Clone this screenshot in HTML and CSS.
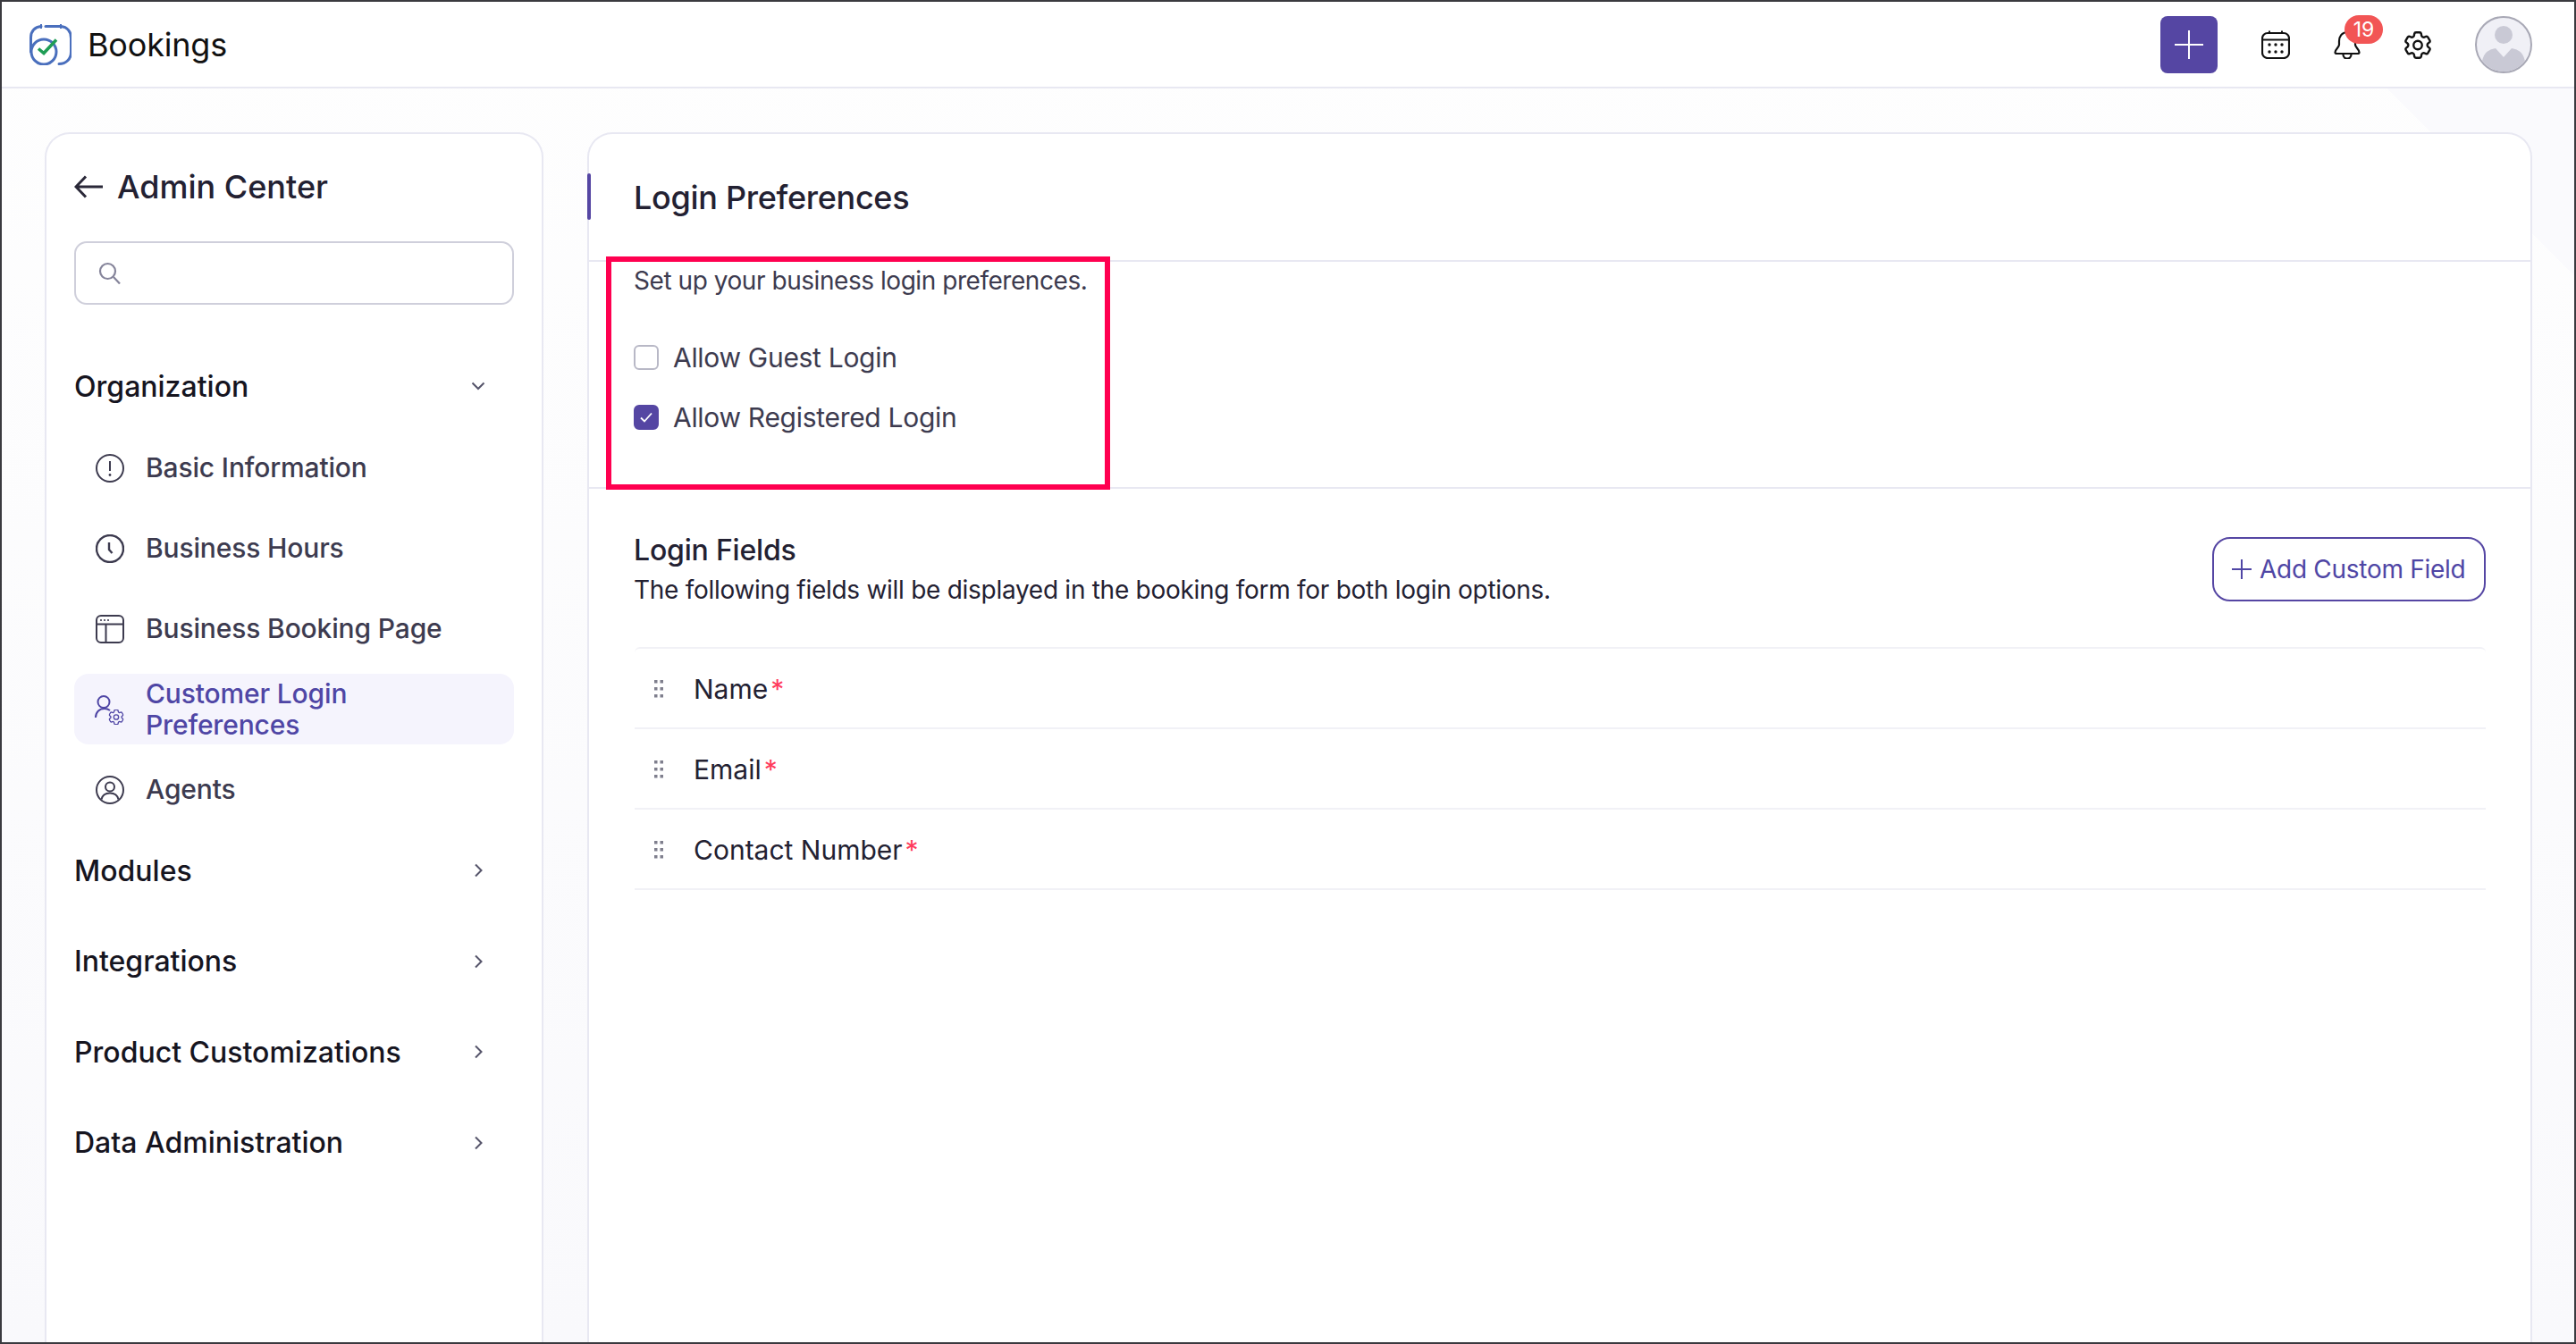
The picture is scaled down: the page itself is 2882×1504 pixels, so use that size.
FILE: index.html
```html
<!DOCTYPE html>
<html lang="en">
<head>
    <meta charset="UTF-8">
    <title>Bookings</title>
    <link rel="stylesheet" href="styles.css">
</head>
<body>
    <svg class="defs" width="0" height="0">
        <symbol id="cog" viewBox="2.5 2.5 19 19">
            <path d="M9.594 3.94c.09-.542.56-.94 1.11-.94h2.593c.55 0 1.02.398 1.11.94l.213 1.281c.063.374.313.686.645.87.074.04.147.083.22.127.325.196.72.257 1.075.124l1.217-.456a1.125 1.125 0 011.37.49l1.296 2.247a1.125 1.125 0 01-.26 1.431l-1.003.827c-.293.24-.438.613-.431.992a6.759 6.759 0 010 .255c-.007.378.138.75.43.99l1.005.828c.424.35.534.954.26 1.43l-1.298 2.247a1.125 1.125 0 01-1.369.491l-1.217-.456c-.355-.133-.75-.072-1.076.124a6.57 6.57 0 01-.22.128c-.331.183-.581.495-.644.869l-.213 1.28c-.09.543-.56.941-1.11.941h-2.594c-.55 0-1.02-.398-1.11-.94l-.213-1.281c-.062-.374-.312-.686-.644-.87a6.52 6.52 0 01-.22-.127c-.325-.196-.72-.257-1.076-.124l-1.217.456a1.125 1.125 0 01-1.369-.49l-1.297-2.247a1.125 1.125 0 01.26-1.431l1.004-.827c.292-.24.437-.613.43-.992a6.932 6.932 0 010-.255c.007-.378-.138-.75-.43-.99l-1.004-.828a1.125 1.125 0 01-.26-1.43l1.297-2.247a1.125 1.125 0 011.37-.491l1.216.456c.356.133.751.072 1.076-.124.072-.044.146-.087.22-.128.332-.183.582-.495.644-.869l.214-1.281z" fill="none" stroke="currentColor" stroke-width="1.5"/>
            <circle cx="12" cy="12" r="3" fill="none" stroke="currentColor" stroke-width="1.5"/>
        </symbol>
        <symbol id="chev-right" viewBox="0 0 16 16">
            <path d="M5 1.500 11.500 8 5 14.500" fill="none" stroke="currentColor" stroke-width="2"/>
        </symbol>
        <symbol id="drag" viewBox="0 0 10 20">
            <path d="M0 0h3.500v3.500H0zM6.500 0H10v3.500H6.500zM0 8h3.500v3.500H0zM6.500 8H10v3.500H6.500zM0 16h3.500v3.500H0zM6.500 16H10v3.500H6.500z" fill="currentColor"/>
        </symbol>
    </svg>
    <div class="frame">
        <!-- Top bar -->
        <header class="topbar">
            <div class="brand">
                <svg class="logo" viewBox="0 0 47 47" width="47" height="47" fill="none">
                    <path d="M13 3.500C6 4 1.500 9 1.500 16V32" stroke="#4a6fbd" stroke-width="3" stroke-linecap="round"/>
                    <path d="M18 3.500H35" stroke="#4a6fbd" stroke-width="3" stroke-linecap="round"/>
                    <path d="M35 3.500C42 4 46.500 9 46.500 17V32C46.500 40 41 45.500 33 45.500" stroke="#4a6fbd" stroke-width="3" stroke-linecap="round"/>
                    <path d="M13 1v5M35 1v5" stroke="#4a6fbd" stroke-width="2"/>
                    <ellipse cx="16" cy="32" rx="14" ry="14" stroke="#4a6fbd" stroke-width="3"/>
                    <path d="M10 28.500l6 5 14-15" stroke="#1f9d55" stroke-width="3.500"/>
                </svg>
                <span class="brand-name">Bookings</span>
            </div>
            <div class="top-actions">
                <div class="add-btn">
                    <svg viewBox="0 0 32 32" width="32" height="32"><path d="M16 0v32M0 16h32" stroke="#fff" stroke-width="2"/></svg>
                </div>
                <svg class="top-icon" viewBox="0 0 32 32" width="32" height="32" fill="none" stroke="#111" stroke-width="2.200">
                    <rect x="1" y="3" width="30" height="28" rx="6"/>
                    <path d="M1 10.500h30M9 0.500v3M23 0.500v3" stroke-width="2"/>
                    <g fill="#111" stroke="none">
                        <circle cx="9" cy="16" r="1.700"/><circle cx="16" cy="16" r="1.700"/><circle cx="23" cy="16" r="1.700"/>
                        <circle cx="9" cy="24" r="1.700"/><circle cx="16" cy="24" r="1.700"/><circle cx="23" cy="24" r="1.700"/>
                    </g>
                </svg>
                <div class="bell">
                    <svg viewBox="0 0 30 32" width="30" height="32" fill="none" stroke="#111" stroke-width="2.200">
                        <path d="M15 2C9 2 6 7 6 12V16C6 19 1.500 21 1.500 24.500C1.500 25.500 2 26 3.500 26H26.500C28 26 28.500 25.500 28.500 24.500C28.500 21 24 19 24 16V12C24 7 21 2 15 2Z"/>
                        <path d="M10.500 27C10.500 33 19.500 33 19.500 27"/>
                    </svg>
                    <span class="badge">19</span>
                </div>
                <svg class="top-icon cog" width="30" height="31"><use href="#cog"/></svg>
                <div class="avatar">
                    <svg viewBox="0 0 60 60" width="60" height="60">
                        <circle cx="30" cy="19" r="10" fill="#c9c9d5"/>
                        <path d="M5 60C5 42 10 36 21 34L30 44L39 34C50 36 55 42 55 60Z" fill="#c9c9d5"/>
                    </svg>
                </div>
            </div>
        </header>

        <div class="content">
            <!-- Sidebar -->
            <aside class="sidebar">
                <div class="side-title">
                    <svg viewBox="0 0 32 26" width="32" height="26" fill="none" stroke="#2a2838" stroke-width="3"><path d="M13 1.500 2 13l11 11.500M2 13h30"/></svg>
                    <span>Admin Center</span>
                </div>
                <div class="search">
                    <svg viewBox="0 0 25 25" width="25" height="25" fill="none" stroke="#85849a" stroke-width="2.200"><circle cx="10.500" cy="10.500" r="8.500"/><path d="m17 17 7 7.500"/></svg>
                </div>
                <div class="nav-head first">
                    <span>Organization</span>
                    <svg viewBox="0 0 16 16" width="16" height="16" fill="none" stroke="#55546a" stroke-width="2"><path d="M1.500 4.500 8 11l6.500-6.500"/></svg>
                </div>
                <ul class="nav-list">
                    <li class="nav-item">
                        <svg viewBox="0 0 32 32" width="32" height="32" fill="none" stroke="currentColor" stroke-width="2"><circle cx="16" cy="16" r="15"/><path d="M16 8v11"/><circle cx="16" cy="23.500" r="1.400" fill="currentColor" stroke="none"/></svg>
                        <span>Basic Information</span>
                    </li>
                    <li class="nav-item">
                        <svg viewBox="0 0 32 32" width="32" height="32" fill="none" stroke="currentColor" stroke-width="2.400"><circle cx="16" cy="16" r="15"/><path d="M15 9v8l3.500 4"/></svg>
                        <span>Business Hours</span>
                    </li>
                    <li class="nav-item">
                        <svg viewBox="0 0 32 32" width="32" height="32" fill="none" stroke="currentColor" stroke-width="2"><rect x="1" y="1" width="30" height="30" rx="5"/><path d="M1 10.500h30M11.500 10.500V31"/><circle cx="6" cy="6" r="1.100" fill="currentColor" stroke="none"/><circle cx="10" cy="6" r="1.100" fill="currentColor" stroke="none"/><circle cx="14" cy="6" r="1.100" fill="currentColor" stroke="none"/></svg>
                        <span>Business Booking Page</span>
                    </li>
                    <li class="nav-item active">
                        <svg viewBox="0 0 34 34" width="34" height="34" fill="none" stroke="currentColor" stroke-width="2"><circle cx="10" cy="8.500" r="6.500"/><path d="M1 26c0-6 4-10 10-10 2.500 0 4.500 .8 6 2"/><use href="#cog" x="15.500" y="17" width="17" height="17"/></svg>
                        <span>Customer Login Preferences</span>
                    </li>
                    <li class="nav-item">
                        <svg viewBox="0 0 32 32" width="32" height="32" fill="none" stroke="currentColor" stroke-width="2"><circle cx="16" cy="16" r="15"/><circle cx="16" cy="12.500" r="5"/><path d="M6.500 26.500c1-4.500 4.500-7 9.500-7s8.500 2.500 9.500 7"/></svg>
                        <span>Agents</span>
                    </li>
                </ul>
                <div class="nav-head modules"><span>Modules</span><svg class="chev" width="16" height="16"><use href="#chev-right"/></svg></div>
                <div class="nav-head"><span>Integrations</span><svg class="chev" width="16" height="16"><use href="#chev-right"/></svg></div>
                <div class="nav-head"><span>Product Customizations</span><svg class="chev" width="16" height="16"><use href="#chev-right"/></svg></div>
                <div class="nav-head"><span>Data Administration</span><svg class="chev" width="16" height="16"><use href="#chev-right"/></svg></div>
            </aside>

            <!-- Main panel -->
            <main class="panel">
                <div class="panel-head"><h1>Login Preferences</h1></div>
                <section class="prefs">
                    <p>Set up your business login preferences.</p>
                    <label class="check-row first">
                        <span class="check"></span>
                        Allow Guest Login
                    </label>
                    <label class="check-row">
                        <span class="check checked">
                            <svg viewBox="0 0 14 12" width="14" height="12" fill="none" stroke="#fff" stroke-width="1.800"><path d="M1 6.500 5 10.500 13 1.500"/></svg>
                        </span>
                        Allow Registered Login
                    </label>
                </section>
                <section class="fields">
                    <div class="fields-head">
                        <div>
                            <h2>Login Fields</h2>
                            <p>The following fields will be displayed in the booking form for both login options.</p>
                        </div>
                        <button class="outline-btn" type="button">
                            <svg viewBox="0 0 22 22" width="22" height="22"><path d="M11 0v22M0 11h22" stroke="currentColor" stroke-width="2"/></svg>
                            Add Custom Field
                        </button>
                    </div>
                    <ul class="field-list">
                        <li><svg class="grip" width="10" height="20"><use href="#drag"/></svg>Name<em>*</em></li>
                        <li><svg class="grip" width="10" height="20"><use href="#drag"/></svg>Email<em>*</em></li>
                        <li><svg class="grip" width="10" height="20"><use href="#drag"/></svg>Contact Number<em>*</em></li>
                    </ul>
                </section>
                <div class="callout"></div>
            </main>
        </div>
    </div>
</body>
</html>
```

FILE: styles.css
```css
* {
    margin: 0;
    padding: 0;
    box-sizing: border-box;
    font-family: Inter, 'Noto Sans', sans-serif;
}
html, body {
    height: 100%;
    overflow: hidden;
    background-color: #ffffff;
}
.defs {
    position: absolute;
}
.frame {
    height: 1504px;
    border: 2px solid #3a3a3f;
    display: flex;
    flex-direction: column;
    overflow: hidden;
    background-image:
        linear-gradient(45deg, transparent 2879px, #fafafd 2879px),
        linear-gradient(180deg, #fefefe, #f9f9fc);
}
/* Top bar */
.topbar {
    height: 97px;
    flex-shrink: 0;
    background-color: #ffffff;
    border-bottom: 2px solid #e8e8f2;
    padding: 16px 47px 0 31px;
    display: flex;
    justify-content: space-between;
    align-items: flex-start;
}
.brand {
    display: flex;
    align-items: center;
    gap: 18px;
    margin-top: 8px;
}
.brand-name {
    font-size: 36px;
    color: #111111;
    letter-spacing: -0.2px;
}
.top-actions {
    display: flex;
    align-items: center;
    gap: 49px;
}
.add-btn {
    width: 64px;
    height: 64px;
    border-radius: 8px;
    background-color: #5546a3;
    display: flex;
    align-items: center;
    justify-content: center;
}
.top-icon {
    display: block;
    flex-shrink: 0;
}
.cog {
    color: #111111;
}
.bell {
    position: relative;
    width: 30px;
    height: 32px;
}
.badge {
    position: absolute;
    left: 12px;
    top: -17px;
    width: 43px;
    height: 32px;
    border-radius: 16px;
    background-color: #f25555;
    color: #ffffff;
    font-size: 23px;
    line-height: 32px;
    text-align: center;
}
.avatar {
    width: 64px;
    height: 64px;
    border-radius: 50%;
    border: 2px solid #a8a8b5;
    background-color: #f0f0f6;
    overflow: hidden;
}
.avatar svg {
    display: block;
}
/* Columns */
.content {
    flex: 1;
    min-height: 0;
    display: flex;
    gap: 49px;
    padding: 49px 47px 0 48px;
}
.sidebar,
.panel {
    background-color: #ffffff;
    border: 2px solid #e8e8f2;
    border-bottom: none;
    border-radius: 28px 28px 0 0;
}
/* Sidebar */
.sidebar {
    width: 558px;
    flex-shrink: 0;
    padding: 39px 31px 0;
}
.side-title {
    height: 40px;
    display: flex;
    align-items: center;
    gap: 16px;
    font-size: 36px;
    font-weight: 500;
    color: #232132;
}
.search {
    margin-top: 41px;
    height: 71px;
    border: 2px solid #cfcfdb;
    border-radius: 14px;
    padding-left: 25px;
    display: flex;
    align-items: center;
}
.nav-head {
    height: 50px;
    margin-top: 51.5px;
    padding-right: 32px;
    display: flex;
    align-items: center;
    justify-content: space-between;
    font-size: 32px;
    font-weight: 500;
    color: #16151f;
}
.nav-head.first {
    margin-top: 66px;
}
.nav-head.modules {
    margin-top: 26px;
}
.chev {
    color: #55546a;
}
.nav-list {
    list-style: none;
    margin-top: 27px;
    display: flex;
    flex-direction: column;
    gap: 11px;
}
.nav-item {
    height: 79px;
    padding-left: 24px;
    border-radius: 16px;
    display: flex;
    align-items: center;
    gap: 24px;
    font-size: 30px;
    font-weight: 450;
    letter-spacing: -0.15px;
    line-height: 35px;
    color: #3d3b4f;
}
.nav-item svg {
    flex-shrink: 0;
}
.nav-item.active {
    background-color: #f5f4fd;
    color: #4f46a5;
    padding-left: 23px;
    gap: 23px;
    padding-right: 120px;
}
/* Main panel */
.panel {
    flex: 1;
    min-width: 0;
    position: relative;
}
.panel-head {
    height: 143px;
    padding-left: 50px;
    border-bottom: 2px solid #e8e8f2;
    display: flex;
    align-items: center;
}
.panel-head::before {
    content: '';
    position: absolute;
    left: -2px;
    top: 44px;
    width: 4px;
    height: 52px;
    border-radius: 2px;
    background-color: #5546a3;
}
.panel-head h1 {
    font-size: 36px;
    font-weight: 500;
    color: #232132;
    letter-spacing: -0.3px;
}
.prefs {
    padding: 1px 50px 58px;
    border-bottom: 2px solid #e8e8f2;
    font-size: 28px;
    letter-spacing: -0.45px;
    line-height: 40px;
    color: #3d3b4f;
}
.check-row {
    display: flex;
    align-items: center;
    gap: 16px;
    height: 40px;
    margin-top: 27px;
    font-size: 30px;
    letter-spacing: -0.3px;
}
.check-row.first {
    margin-top: 46px;
}
.check {
    width: 28px;
    height: 28px;
    border: 2px solid #b8b8c6;
    border-radius: 6px;
    display: flex;
    align-items: center;
    justify-content: center;
}
.check.checked {
    background-color: #5546a3;
    border-color: #5546a3;
}
.fields {
    padding: 49px 50px 0 50px;
}
.fields-head {
    display: flex;
    justify-content: space-between;
    align-items: flex-start;
}
.fields-head h2 {
    font-size: 32px;
    font-weight: 500;
    letter-spacing: -0.2px;
    line-height: 40px;
    color: #232132;
}
.fields-head p {
    margin-top: 4px;
    font-size: 28px;
    letter-spacing: -0.28px;
    line-height: 40px;
    color: #232132;
}
.outline-btn {
    margin-top: 5px;
    height: 72px;
    width: 306px;
    padding-left: 20px;
    border: 2px solid #5546a3;
    border-radius: 20px;
    background-color: #ffffff;
    color: #4f46a5;
    font-size: 28px;
    letter-spacing: -0.28px;
    white-space: nowrap;
    display: flex;
    align-items: center;
    gap: 9px;
}
.field-list {
    list-style: none;
    margin: 44px 0 0 1px;
    border-top: 2px solid #f1f1f6;
    border-radius: 6px;
}
.field-list li {
    height: 90px;
    padding: 1px 0 0 22px;
    border-bottom: 2px solid #f1f1f6;
    display: flex;
    align-items: center;
    font-size: 30px;
    color: #232132;
}
.grip {
    margin-right: 34px;
    color: #7f7f8d;
}
.field-list em {
    font-style: normal;
    color: #ff3b5c;
    margin-left: 3px;
}
/* Red highlight drawn over the screenshot */
.callout {
    position: absolute;
    left: 19px;
    top: 137px;
    width: 564px;
    height: 261px;
    border: 6px solid #ff0050;
}
```
